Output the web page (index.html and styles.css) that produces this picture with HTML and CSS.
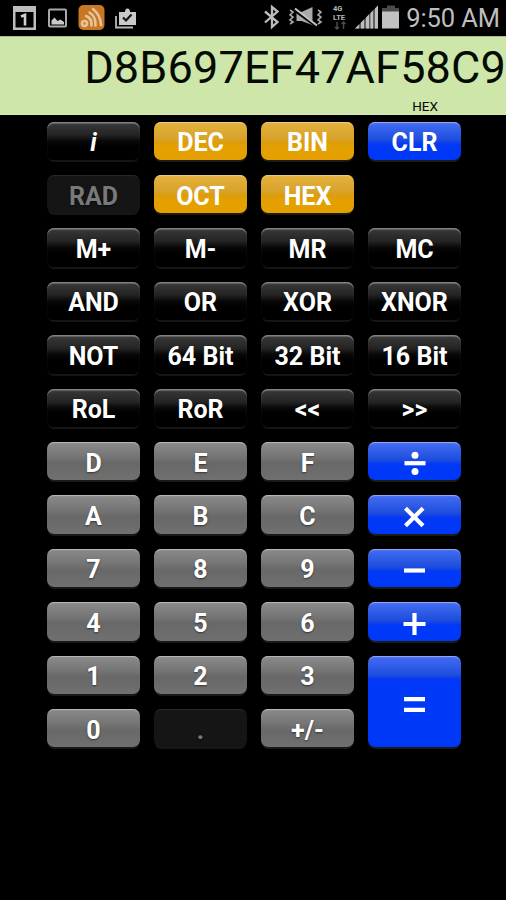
FILE: index.html
```html
<!DOCTYPE html>
<html lang="en">
<head>
<meta charset="utf-8">
<title>Calculator</title>
<link rel="stylesheet" href="styles.css">
</head>
<body>
<header class="status">
  <svg class="status-left" width="150" height="36" viewBox="0 0 150 36">
    <path fill="#bdbdbd" fill-rule="evenodd" d="M13 6h23v24H13zM15.500 12v15.500h18V12z"/>
    <path fill="none" stroke="#d0d0d0" stroke-width="2.600" d="M21 16.500l4-1.500v10.500"/>
    <rect x="49" y="9.500" width="17" height="17" rx="1" fill="none" stroke="#a9a9a9" stroke-width="2"/>
    <path fill="#c9c9c9" d="M51.500 24.500v-4l3-3 3 3.500 3-1.500 3.500 2.500v2.500z"/>
    <rect x="78.500" y="5" width="26" height="25" rx="5" fill="#c87824"/>
    <g fill="none" stroke="#e6c49b" stroke-width="2.600">
      <circle cx="84.500" cy="23.500" r="2.500"/>
      <path d="M86 16q6 2 5.500 9.500M89.500 12.500q6.500 4 6 13M93 9q7.500 6 8 16" stroke-linecap="round"/>
    </g>
    <path fill="#c9c9c9" d="M119 12h6q0-3.500 2.500-3.500T130 12h6v13h-17z"/>
    <path fill="none" stroke="#151515" stroke-width="2.200" d="M123 17.500l3 3 5.500-6"/>
    <path fill="none" stroke="#b8b8b8" stroke-width="1.800" d="M116 16v11.500h17"/>
  </svg>
  <svg class="status-right" width="144" height="36" viewBox="260 0 144 36">
    <path fill="none" stroke="#bdbdbd" stroke-width="2.300" d="M265 11.500l12.500 10.500-5.500 5V7l5.500 4.500L265 22.500"/>
    <path fill="none" stroke="#a8a8a8" stroke-width="1.600" d="M290 10l3 2-3 3 3 2-3 3 3 2-3 2M318 10l3 2-3 3 3 2-3 3 3 2-3 2"/>
    <path fill="#aaa" d="M296.500 12h5l11-5v18l-11-4h-5z"/>
    <path stroke="#050505" stroke-width="3" d="M295 10.500l22 16"/>
    <path stroke="#c4c4c4" stroke-width="2" d="M295 8.500l22 17"/>
    <g class="network"><text x="333" y="10.500">4G</text><text x="333" y="19.800">LTE</text></g>
    <path fill="none" stroke="#4a4a4a" stroke-width="1.500" d="M337 22v7m-2-2l2 2 2-2M343.500 29v-7m-2 2l2-2 2 2"/>
    <path fill="#606060" d="M355 28.500L378 5.500v23z"/>
    <path fill="#bdbdbd" d="M355 28.500l4-4v4zM361 22.500l3-3v9h-3zM366 17.500l3-3v14h-3zM370.500 13l2.500-2.500v18h-2.500zM375 8.500l3-3v23h-3z"/>
    <path fill="#4a4a4a" d="M387 5.500h8V8h4v4h-17V8h5z"/>
    <path fill="#c2c2c2" d="M382 11.500h17v17h-17z"/>
  </svg>
  <span class="clock">9:50 AM</span>
</header>
<section class="display">
  <div class="value">D8B697EF47AF58C9</div>
  <div class="mode">HEX</div>
</section>
<main class="keys">
  <button class="key info">i</button><button class="key gold">DEC</button><button class="key gold">BIN</button><button class="key blue">CLR</button>
  <button class="key off">RAD</button><button class="key gold">OCT</button><button class="key gold">HEX</button><span></span>
  <button class="key">M+</button><button class="key">M-</button><button class="key">MR</button><button class="key">MC</button>
  <button class="key">AND</button><button class="key">OR</button><button class="key">XOR</button><button class="key">XNOR</button>
  <button class="key">NOT</button><button class="key">64 Bit</button><button class="key">32 Bit</button><button class="key">16 Bit</button>
  <button class="key">RoL</button><button class="key">RoR</button><button class="key">&lt;&lt;</button><button class="key">&gt;&gt;</button>
  <button class="key gray">D</button><button class="key gray">E</button><button class="key gray">F</button>
  <button class="key blue" aria-label="Divide"><svg class="op" viewBox="0 0 26 26"><path d="M2.500 12.200h21"/><circle cx="13" cy="4.200" r="3.500"/><circle cx="13" cy="20.500" r="3.500"/></svg></button>
  <button class="key gray">A</button><button class="key gray">B</button><button class="key gray">C</button>
  <button class="key blue" aria-label="Multiply"><svg class="op" viewBox="0 0 26 26"><path d="M3.500 4.300l17.500 17.500m0-17.500l-17.500 17.500"/></svg></button>
  <button class="key gray">7</button><button class="key gray">8</button><button class="key gray">9</button>
  <button class="key blue" aria-label="Subtract"><svg class="op" viewBox="0 0 26 26"><path d="M2 13.500h21"/></svg></button>
  <button class="key gray">4</button><button class="key gray">5</button><button class="key gray">6</button>
  <button class="key blue" aria-label="Add"><svg class="op" viewBox="0 0 26 26"><path d="M1.500 13h22M12.500 2v22"/></svg></button>
  <button class="key gray">1</button><button class="key gray">2</button><button class="key gray">3</button>
  <button class="key blue tall" aria-label="Equals"><svg class="op" viewBox="0 0 26 26"><path d="M2 8.200h21M2 18.800h21"/></svg></button>
  <button class="key gray">0</button><button class="key off">.</button><button class="key gray">+/-</button>
</main>
</body>
</html>
```

FILE: styles.css
```css
* { box-sizing: border-box; }
body {
  margin: 0;
  width: 506px;
  height: 900px;
  overflow: hidden;
  background: #000;
  font-family: Roboto, "Liberation Sans", sans-serif;
}
.status {
  display: flex;
  align-items: center;
  height: 36px;
  padding-right: 6px;
}
.status-right { margin-left: auto; }
.clock {
  width: 96px;
  text-align: right;
  white-space: nowrap;
  color: #bebebe;
  font-size: 25.500px;
  line-height: 34px;
  letter-spacing: -0.1px;
}
.network text { fill: #b5b5b5; font-size: 7.500px; font-weight: 700; }
.display {
  height: 79px;
  background: #cee6aa;
  border-top: 1px solid #a6bd88;
  border-bottom: 1px solid #d8edb8;
  color: #050b03;
}
.value {
  height: 60px;
  padding-top: 4px;
  text-align: right;
  white-space: nowrap;
  font-size: 45px;
  line-height: 53px;
  letter-spacing: 0.17px;
}
.mode {
  padding: 1px 68px 0 0;
  text-align: right;
  font-size: 13.500px;
  line-height: 16px;
}
.keys {
  display: grid;
  grid-template-columns: repeat(4, 93px);
  grid-template-rows: repeat(12, 38.4px);
  column-gap: 14px;
  row-gap: 15px;
  padding: 6.600px 0 0 47px;
}
.key {
  display: flex;
  align-items: center;
  justify-content: center;
  padding: 5px 0 0;
  border: 0;
  border-radius: 7px;
  color: #fff;
  font: 700 25px/30px Roboto, "Liberation Sans", sans-serif;
  white-space: nowrap;
  background: linear-gradient(#3a3a3a, #242424 34%, #080808 50%, #000 65%);
  box-shadow: inset 0 2px 1px -0.5px #858585, 0 3px 0 -1px #151515;
  text-shadow: 0 1px 2px #0008;
}
.gold {
  background: linear-gradient(#e4b23d, #d8a32b 43%, #dc9d0c 54%, #e3a000 66%);
  box-shadow: inset 0 2px 1px -1px #e9cd8a, 0 3px 0 -1px #1b1a16;
  text-shadow: none;
}
.blue {
  background: linear-gradient(#456df5, #1e4edb 46%, #0439f4 58%, #0038f8 70%);
  box-shadow: inset 0 2px 1px -1px #96adf0, 0 3px 0 -1px #1b1a16;
  text-shadow: none;
}
.gray {
  background: linear-gradient(#8b8b8b, #747474 40%, #686868 55%, #707070);
  box-shadow: inset 0 2px 1px -1px #bababa, 0 3px 0 -1px #191919;
}
.off {
  color: #797979;
  background: #151515;
  box-shadow: inset 0 2px 1px -1px #292929, 0 3px 0 -1px #171717;
}
.info { font-style: italic; }
.tall {
  grid-row: span 2;
  background: linear-gradient(#456df5, #1e4edb 21%, #0439f4 25%, #0038f8 32%);
}
.op {
  width: 26px;
  height: 26px;
  overflow: visible;
  fill: #fff;
}
.op path {
  fill: none;
  stroke: #fff;
  stroke-width: 4.200;
}
```
